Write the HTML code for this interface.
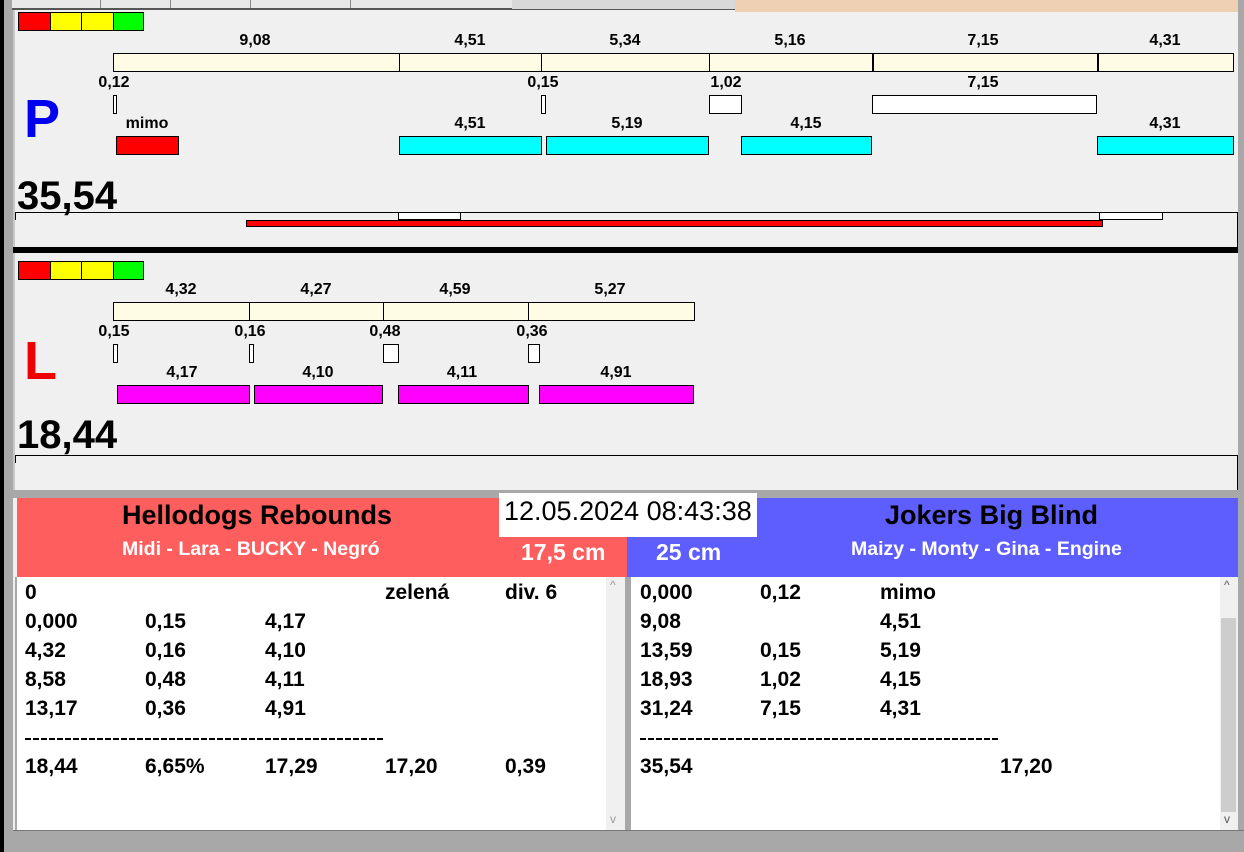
<!DOCTYPE html>
<html><head><meta charset="utf-8"><style>
*{margin:0;padding:0;box-sizing:border-box}
body{width:1244px;height:852px;position:relative;overflow:hidden;background:#f0f0f0;font-family:"Liberation Sans",Arial,sans-serif}
div,span{position:absolute}
.b{border:1px solid #000}
.y{background:#fffce6;border:1px solid #000}
.w{background:#fff;border:1px solid #000}
.c{background:#00ffff;border:1px solid #000}
.m{background:#ff00ff;border:1px solid #000}
.l{font-weight:bold;font-size:16px;transform:translateX(-50%);white-space:nowrap;line-height:17px}
.t{font-weight:bold;font-size:21px;line-height:24px;white-space:nowrap}
.d{height:2px;background:repeating-linear-gradient(90deg,#000 0 6px,transparent 6px 8px)}
</style></head><body>
<!-- frame -->
<div style="left:0;top:0;width:4px;height:852px;background:#000"></div>
<div style="left:4px;top:0;width:9px;height:852px;background:#a8a8a8"></div>
<div style="left:12px;top:0;width:723px;height:10px;background:#e8e8e8;border-bottom:2px solid #555"></div>
<div style="left:100px;top:0;width:1px;height:8px;background:#888"></div>
<div style="left:170px;top:0;width:1px;height:8px;background:#888"></div>
<div style="left:250px;top:0;width:1px;height:8px;background:#888"></div>
<div style="left:350px;top:0;width:1px;height:8px;background:#888"></div>
<div style="left:512px;top:0;width:223px;height:9px;background:#d8d8d8"></div>
<div style="left:735px;top:0;width:503px;height:12px;background:#f0d0b4"></div>
<div style="left:1238px;top:0;width:6px;height:852px;background:#a8a8a8"></div>
<div style="left:13px;top:10px;width:2px;height:480px;background:#c8c8c8"></div>

<!-- panel 1 -->
<div class="b" style="left:18px;top:12px;width:33px;height:19px;background:#f00"></div>
<div class="b" style="left:50px;top:12px;width:32px;height:19px;background:#ff0"></div>
<div class="b" style="left:81px;top:12px;width:33px;height:19px;background:#ff0"></div>
<div class="b" style="left:113px;top:12px;width:31px;height:19px;background:#0f0"></div>

<span class="l" style="left:255px;top:32px">9,08</span>
<span class="l" style="left:470px;top:32px">4,51</span>
<span class="l" style="left:625px;top:32px">5,34</span>
<span class="l" style="left:790px;top:32px">5,16</span>
<span class="l" style="left:983px;top:32px">7,15</span>
<span class="l" style="left:1165px;top:32px">4,31</span>
<div class="y" style="left:113px;top:53px;width:287px;height:19px"></div>
<div class="y" style="left:399px;top:53px;width:143px;height:19px"></div>
<div class="y" style="left:541px;top:53px;width:169px;height:19px"></div>
<div class="y" style="left:709px;top:53px;width:164px;height:19px"></div>
<div class="y" style="left:872px;top:53px;width:226px;height:19px;border-left-width:2px"></div>
<div class="y" style="left:1097px;top:53px;width:137px;height:19px;border-left-width:2px"></div>

<span class="l" style="left:114px;top:74px">0,12</span>
<span class="l" style="left:543px;top:74px">0,15</span>
<span class="l" style="left:726px;top:74px">1,02</span>
<span class="l" style="left:983px;top:74px">7,15</span>
<div class="w" style="left:113px;top:95px;width:4px;height:19px"></div>
<div class="w" style="left:541px;top:95px;width:5px;height:19px"></div>
<div class="w" style="left:709px;top:95px;width:33px;height:19px"></div>
<div class="w" style="left:872px;top:95px;width:225px;height:19px"></div>

<span class="l" style="left:147px;top:115px">mimo</span>
<span class="l" style="left:470px;top:115px">4,51</span>
<span class="l" style="left:627px;top:115px">5,19</span>
<span class="l" style="left:806px;top:115px">4,15</span>
<span class="l" style="left:1165px;top:115px">4,31</span>
<div class="b" style="left:116px;top:136px;width:63px;height:19px;background:#f00"></div>
<div class="c" style="left:399px;top:136px;width:143px;height:19px"></div>
<div class="c" style="left:546px;top:136px;width:163px;height:19px"></div>
<div class="c" style="left:741px;top:136px;width:131px;height:19px"></div>
<div class="c" style="left:1097px;top:136px;width:137px;height:19px"></div>

<span style="left:24px;top:88px;font-size:54px;font-weight:bold;color:#0000ee;line-height:62px">P</span>
<span style="left:17px;top:173px;font-size:40px;font-weight:bold;line-height:46px">35,54</span>

<div style="left:15px;top:212px;width:1223px;height:1px;background:#000"></div>
<div style="left:15px;top:212px;width:1px;height:8px;background:#000"></div>
<div style="left:1237px;top:212px;width:1px;height:35px;background:#000"></div>
<div class="w" style="left:398px;top:212px;width:63px;height:8px"></div>
<div class="w" style="left:1099px;top:212px;width:64px;height:8px"></div>
<div class="b" style="left:246px;top:220px;width:857px;height:7px;background:#f00"></div>
<div style="left:13px;top:247px;width:1225px;height:6px;background:#000"></div>

<!-- panel 2 -->
<div class="b" style="left:18px;top:261px;width:33px;height:19px;background:#f00"></div>
<div class="b" style="left:50px;top:261px;width:32px;height:19px;background:#ff0"></div>
<div class="b" style="left:81px;top:261px;width:33px;height:19px;background:#ff0"></div>
<div class="b" style="left:113px;top:261px;width:31px;height:19px;background:#0f0"></div>

<span class="l" style="left:181px;top:281px">4,32</span>
<span class="l" style="left:316px;top:281px">4,27</span>
<span class="l" style="left:455px;top:281px">4,59</span>
<span class="l" style="left:610px;top:281px">5,27</span>
<div class="y" style="left:113px;top:302px;width:137px;height:19px"></div>
<div class="y" style="left:249px;top:302px;width:135px;height:19px"></div>
<div class="y" style="left:383px;top:302px;width:146px;height:19px"></div>
<div class="y" style="left:528px;top:302px;width:167px;height:19px"></div>

<span class="l" style="left:114px;top:323px">0,15</span>
<span class="l" style="left:250px;top:323px">0,16</span>
<span class="l" style="left:385px;top:323px">0,48</span>
<span class="l" style="left:532px;top:323px">0,36</span>
<div class="w" style="left:113px;top:344px;width:5px;height:19px"></div>
<div class="w" style="left:249px;top:344px;width:5px;height:19px"></div>
<div class="w" style="left:383px;top:344px;width:16px;height:19px"></div>
<div class="w" style="left:528px;top:344px;width:12px;height:19px"></div>

<span class="l" style="left:182px;top:364px">4,17</span>
<span class="l" style="left:318px;top:364px">4,10</span>
<span class="l" style="left:462px;top:364px">4,11</span>
<span class="l" style="left:616px;top:364px">4,91</span>
<div class="m" style="left:117px;top:385px;width:133px;height:19px"></div>
<div class="m" style="left:254px;top:385px;width:129px;height:19px"></div>
<div class="m" style="left:398px;top:385px;width:131px;height:19px"></div>
<div class="m" style="left:539px;top:385px;width:155px;height:19px"></div>

<span style="left:24px;top:330px;font-size:54px;font-weight:bold;color:#ee0000;line-height:62px">L</span>
<span style="left:17px;top:412px;font-size:40px;font-weight:bold;line-height:46px">18,44</span>

<div style="left:15px;top:455px;width:1223px;height:1px;background:#000"></div>
<div style="left:15px;top:455px;width:1px;height:8px;background:#000"></div>
<div style="left:1237px;top:455px;width:1px;height:35px;background:#000"></div>
<div style="left:13px;top:490px;width:1225px;height:8px;background:#a8a8a8"></div>

<!-- header -->
<div style="left:17px;top:498px;width:610px;height:79px;background:#ff5e5e"></div>
<div style="left:627px;top:498px;width:611px;height:79px;background:#5e5eff"></div>
<span style="left:122px;top:499px;font-size:27px;font-weight:bold;line-height:32px">Hellodogs Rebounds</span>
<span style="left:122px;top:537px;font-size:19.5px;font-weight:bold;color:#fff;line-height:24px">Midi - Lara - BUCKY - Negró</span>
<span style="left:521px;top:538px;font-size:23px;font-weight:bold;color:#fff;line-height:28px">17,5 cm</span>
<span style="left:656px;top:538px;font-size:23px;font-weight:bold;color:#fff;line-height:28px">25 cm</span>
<span style="left:885px;top:499px;font-size:27px;font-weight:bold;line-height:32px">Jokers Big Blind</span>
<span style="left:851px;top:537px;font-size:19.5px;font-weight:bold;color:#fff;line-height:24px">Maizy - Monty - Gina - Engine</span>
<div style="left:499px;top:493px;width:258px;height:44px;background:#fff"></div>
<span style="left:504px;top:495px;font-size:27px;line-height:32px">12.05.2024 08:43:38</span>

<!-- lists -->
<div style="left:15px;top:577px;width:2px;height:253px;background:#a8a8a8"></div>
<div style="left:17px;top:577px;width:589px;height:253px;background:#fff"></div>
<div style="left:606px;top:577px;width:19px;height:253px;background:#f0f0f0"></div>
<span style="left:610px;top:578px;font-size:12px;color:#999">^</span>
<span style="left:610px;top:812px;font-size:12px;color:#999">v</span>
<div style="left:625px;top:577px;width:6px;height:253px;background:#a8a8a8"></div>
<div style="left:631px;top:577px;width:589px;height:253px;background:#fff"></div>
<div style="left:1220px;top:577px;width:18px;height:253px;background:#f0f0f0"></div>
<div style="left:1221px;top:618px;width:15px;height:194px;background:#cdcdcd"></div>
<span style="left:1224px;top:578px;font-size:12px;color:#555">^</span>
<span style="left:1224px;top:812px;font-size:12px;color:#555">v</span>
<div style="left:13px;top:830px;width:1231px;height:22px;background:#a8a8a8;border-top:1px solid #777"></div>

<span class="t" style="left:25px;top:581px">0</span>
<span class="t" style="left:385px;top:581px">zelená</span>
<span class="t" style="left:505px;top:581px">div. 6</span>
<span class="t" style="left:25px;top:610px">0,000</span><span class="t" style="left:145px;top:610px">0,15</span><span class="t" style="left:265px;top:610px">4,17</span>
<span class="t" style="left:25px;top:639px">4,32</span><span class="t" style="left:145px;top:639px">0,16</span><span class="t" style="left:265px;top:639px">4,10</span>
<span class="t" style="left:25px;top:668px">8,58</span><span class="t" style="left:145px;top:668px">0,48</span><span class="t" style="left:265px;top:668px">4,11</span>
<span class="t" style="left:25px;top:697px">13,17</span><span class="t" style="left:145px;top:697px">0,36</span><span class="t" style="left:265px;top:697px">4,91</span>
<div class="d" style="left:25px;top:738px;width:360px"></div>
<span class="t" style="left:25px;top:755px">18,44</span><span class="t" style="left:145px;top:755px">6,65%</span><span class="t" style="left:265px;top:755px">17,29</span><span class="t" style="left:385px;top:755px">17,20</span><span class="t" style="left:505px;top:755px">0,39</span>

<span class="t" style="left:640px;top:581px">0,000</span><span class="t" style="left:760px;top:581px">0,12</span><span class="t" style="left:880px;top:581px">mimo</span>
<span class="t" style="left:640px;top:610px">9,08</span><span class="t" style="left:880px;top:610px">4,51</span>
<span class="t" style="left:640px;top:639px">13,59</span><span class="t" style="left:760px;top:639px">0,15</span><span class="t" style="left:880px;top:639px">5,19</span>
<span class="t" style="left:640px;top:668px">18,93</span><span class="t" style="left:760px;top:668px">1,02</span><span class="t" style="left:880px;top:668px">4,15</span>
<span class="t" style="left:640px;top:697px">31,24</span><span class="t" style="left:760px;top:697px">7,15</span><span class="t" style="left:880px;top:697px">4,31</span>
<div class="d" style="left:640px;top:738px;width:360px"></div>
<span class="t" style="left:640px;top:755px">35,54</span><span class="t" style="left:1000px;top:755px">17,20</span>
</body></html>
